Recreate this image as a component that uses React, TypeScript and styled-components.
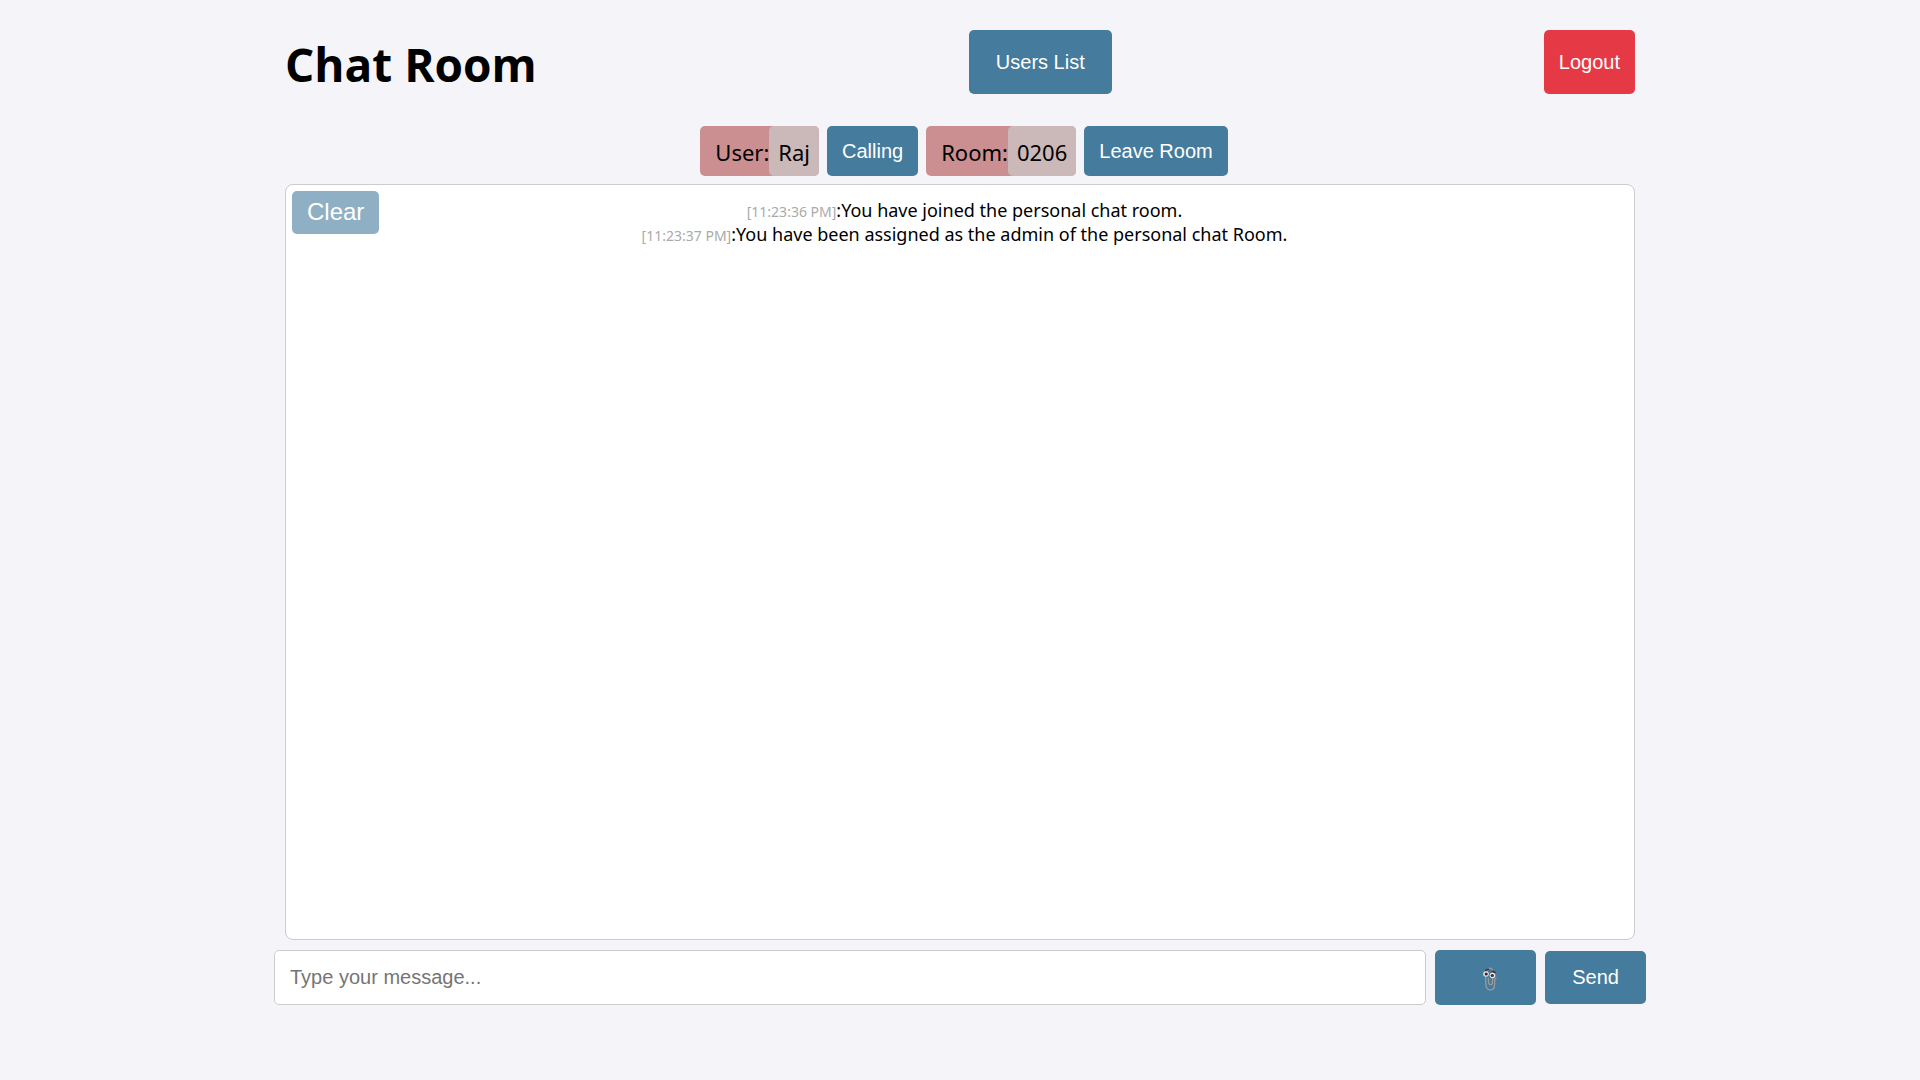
import React from "react";
import styled, { createGlobalStyle } from "styled-components";

const GlobalStyle = createGlobalStyle`
  *, *::before, *::after { box-sizing: border-box; }
  body {
    margin: 0;
    background: #f4f4f9;
    color: #000;
    font-family: "Noto Sans", "Open Sans", sans-serif;
  }
`;

const Page = styled.main`
  max-width: 1372px;
  margin: 0 auto;
  padding-top: 30px;
`;

const Header = styled.header`
  display: flex;
  justify-content: space-between;
  align-items: stretch;
  height: 64px;
  margin: 0 11px 32px;
`;

const Title = styled.h1`
  margin: 0;
  padding-top: 4px;
  font-family: "Open Sans", "Noto Sans", sans-serif;
  font-size: 46px;
  line-height: 60px;
  font-weight: 700;
`;

const Button = styled.button<{ $wide?: boolean; $danger?: boolean }>`
  padding: 15px ${(p) => (p.$wide ? 27 : 15)}px;
  border: none;
  border-radius: 5px;
  background: ${(p) => (p.$danger ? "#e63946" : "#457b9d")};
  color: #fff;
  font-family: "Liberation Sans", Arial, sans-serif;
  font-size: 20px;
  line-height: 23px;
  cursor: pointer;
`;

const RoomBar = styled.section`
  display: flex;
  justify-content: center;
  gap: 8px;
  height: 50px;
  margin: 0 11px 8px 19px;

  ${Button} {
    padding-top: 0;
    padding-bottom: 0;
  }
`;

const Chip = styled.div`
  display: flex;
  padding-left: 15px;
  border-radius: 5px;
  background: #cb8f92;
  font-size: 22px;
  line-height: 30px;
`;

const ChipLabel = styled.span`
  padding-top: 11px;
`;

const ChipValue = styled.span`
  padding: 11px 9px 0;
  border-radius: 5px;
  background: #cbb8b9;
`;

const Panel = styled.section`
  position: relative;
  height: 70vh;
  margin: 0 11px 10px;
  padding: 14px 11px 14px 20px;
  border: 1px solid #ccc;
  border-radius: 8px;
  background: #fff;
  overflow-y: auto;
`;

const ClearButton = styled(Button)`
  position: absolute;
  top: 6px;
  left: 6px;
  padding: 7px 15px 9px;
  font-size: 24px;
  line-height: 27px;
  opacity: 0.6;
`;

const Messages = styled.ul`
  margin: 0;
  padding: 0;
  list-style: none;
  text-align: center;
  font-size: 18px;
  line-height: 23px;
`;

const Time = styled.time`
  color: #aaa;
  font-size: 14px;
`;

const Composer = styled.form`
  display: flex;
  align-items: center;
  gap: 9px;
`;

const MessageInput = styled.input`
  flex: 1;
  min-width: 0;
  height: 55px;
  padding: 0 15px;
  border: 1px solid #ccc;
  border-radius: 5px;
  background: #fff;
  font-family: "Liberation Sans", Arial, sans-serif;
  font-size: 20px;

  &::placeholder { color: #757575; }
`;

const AttachButton = styled(Button)`
  display: flex;
  justify-content: center;
  align-items: center;
  width: 101px;
  height: 55px;
  padding: 2px 0 0 8px;
`;

const messages = [
  { time: "11:23:36 PM", text: "You have joined the personal chat room." },
  { time: "11:23:37 PM", text: "You have been assigned as the admin of the personal chat Room." },
];

function PaperclipIcon() {
  return (
    <svg width="14" height="24" viewBox="0 0 14 24" fill="none" aria-hidden="true">
      <path
        d="M4 4.5C4.5 2 6 .9 7.5 1.1C9.4 1.3 9.6 3.3 9.5 5V15.5C9.5 18.4 5.8 18.4 5.6 15.5L5.3 11.5M2.6 10C2.6 13 2.5 16 3 18.5C3.5 21.5 5.2 23 7.5 22.9C10.2 22.8 11.4 21.3 11.5 18.5L11.7 13.5C11.7 12 12.2 11.5 13 11.2"
        stroke="#9b9a9b"
        strokeWidth="1.3"
        strokeLinecap="round"
      />
      <circle cx="3" cy="7" r="2.8" fill="#e2e6e9" />
      <circle cx="9.5" cy="8.5" r="2.8" fill="#e2e6e9" />
      <circle cx="3.2" cy="7" r="1.6" fill="#41262c" />
      <circle cx="9.3" cy="8.5" r="1.6" fill="#41262c" />
      <path d="M2.7 3.3L5.5 2.3M9 4.2L12 5.2" stroke="#492e38" strokeWidth="1.5" strokeLinecap="round" />
    </svg>
  );
}

export default function App() {
  return (
    <>
      <GlobalStyle />
      <Page>
        <Header>
          <Title>Chat Room</Title>
          <Button type="button" $wide>Users List</Button>
          <Button type="button" $danger>Logout</Button>
        </Header>
        <RoomBar>
          <Chip>
            <ChipLabel>User:</ChipLabel>
            <ChipValue>Raj</ChipValue>
          </Chip>
          <Button type="button">Calling</Button>
          <Chip>
            <ChipLabel>Room:</ChipLabel>
            <ChipValue>0206</ChipValue>
          </Chip>
          <Button type="button">Leave Room</Button>
        </RoomBar>
        <Panel>
          <ClearButton type="button">Clear</ClearButton>
          <Messages>
            {messages.map((m) => (
              <li key={m.time}>
                <Time>[{m.time}]</Time>:{m.text}
              </li>
            ))}
          </Messages>
        </Panel>
        <Composer onSubmit={(e) => e.preventDefault()}>
          <MessageInput type="text" aria-label="Message" placeholder="Type your message..." />
          <AttachButton type="button" aria-label="Attach file">
            <PaperclipIcon />
          </AttachButton>
          <Button type="submit" $wide>Send</Button>
        </Composer>
      </Page>
    </>
  );
}
